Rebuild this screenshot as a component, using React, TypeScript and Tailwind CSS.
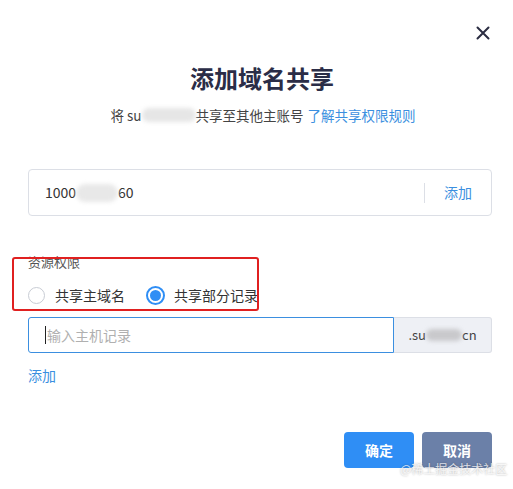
import React from "react";

const App = () => {
  return (
    <div
      className="w-[513px] h-[489px] bg-white relative overflow-hidden text-[#333]"
      style={{ fontFamily: '"Noto Sans CJK SC", "Noto Sans", sans-serif' }}
    >
      {/* Close */}
      <button className="absolute left-[475px] top-[25px] w-[16px] h-[16px] flex items-center justify-center">
        <svg width="14" height="14" viewBox="0 0 14 14">
          <path d="M1.5 1.5 L12.5 12.5 M12.5 1.5 L1.5 12.5" stroke="#2b2d42" strokeWidth="2" strokeLinecap="round" />
        </svg>
      </button>

      <div className="pt-[59px] pl-[28px] pr-[21px] flex flex-col">
        <h2 className="text-center text-[24px] leading-[38px] font-bold text-[#2b2d47] ml-[4px]">
          添加域名共享
        </h2>
        <p className="mt-[8px] text-center text-[13.5px] leading-[20px] text-[#444] flex justify-center items-center ml-[6px]">
          <span>将 su</span>
          <span className="inline-block w-[54px] h-[14px] bg-[#e6e6e6] rounded-full blur-[2px]" />
          <span>共享至其他主账号</span>
          <a className="ml-[4px] text-[#3b8fe0]">了解共享权限规则</a>
        </p>

        <div className="mt-[44px] h-[47px] border border-[#dcdfe6] rounded-[4px] flex items-center">
          <div className="flex-1 pl-[16px] text-[14px] text-[#333] flex items-center">
            <span>1000</span>
            <span className="inline-block w-[42px] h-[18px] bg-[#e8e8e8] rounded-full blur-[2px]" />
            <span>60</span>
          </div>
          <div className="w-px h-[20px] bg-[#dcdfe6]" />
          <a className="px-[19px] text-[14px] text-[#3b8fe0]">添加</a>
        </div>

        <div className="mt-[38px] text-[13px] leading-[16px] text-[#555]">资源权限</div>
        <div className="mt-[15px] flex items-center text-[14px] leading-[20px] text-[#333]">
          <span className="w-[17px] h-[17px] rounded-full border border-[#c8ccd4] bg-white" />
          <span className="ml-[10px]">共享主域名</span>
          <span className="ml-[21px] w-[19px] h-[19px] rounded-full border-[2px] border-[#2f8ef5] flex items-center justify-center">
            <span className="w-[11px] h-[11px] rounded-full bg-[#2f8ef5]" />
          </span>
          <span className="ml-[9px]">共享部分记录</span>
        </div>

        <div className="mt-[12px] flex h-[36px]">
          <div className="flex-1 border border-[#3b8fe0] rounded-l-[3px] flex items-center pl-[16px] text-[14px] text-[#b0b0b0]">
            <span className="w-px h-[18px] bg-[#222] mr-[1px]" />
            输入主机记录
          </div>
          <div className="w-[98px] bg-[#eef0f5] border border-l-0 border-[#dcdfe6] rounded-r-[3px] flex items-center justify-center text-[13px] text-[#444]">
            <span>.su</span>
            <span className="inline-block w-[36px] h-[12px] bg-[#c9c9cc] rounded-full blur-[2px]" />
            <span>cn</span>
          </div>
        </div>

        <a className="mt-[13px] text-[14px] leading-[18px] text-[#3b8fe0]">添加</a>

        <div className="mt-[48px] flex justify-end gap-[8px]">
          <button className="w-[70px] h-[36px] rounded-[4px] bg-[#2f8ef5] text-white text-[14px] font-bold">确定</button>
          <button className="w-[70px] h-[36px] rounded-[4px] bg-[#6b80a8] text-white text-[14px] font-bold">取消</button>
        </div>
      </div>

      {/* highlight box */}
      <div className="absolute left-[12px] top-[257px] w-[247px] h-[54px] border-[2px] border-[#e02020] rounded-[3px] pointer-events-none" />

      {/* watermark */}
      <div className="absolute left-[400px] top-[460px] text-[12px] text-white/80 [text-shadow:0_0_2px_rgba(0,0,0,0.35)]">
        @稀土掘金技术社区
      </div>
    </div>
  );
};

export default App;
